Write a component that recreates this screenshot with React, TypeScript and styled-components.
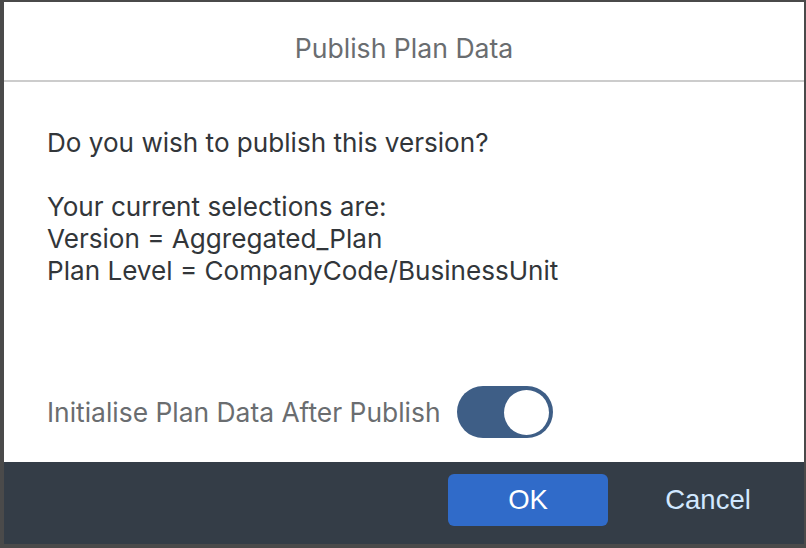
import * as React from "react";
import styled, { createGlobalStyle } from "styled-components";

const GlobalStyle = createGlobalStyle`
  html, body {
    margin: 0;
    padding: 0;
    background: #4a4a4a;
  }
  body {
    font-family: Inter, "Noto Sans", "Liberation Sans", Arial, sans-serif;
  }
`;

const Backdrop = styled.div`
  width: 806px;
  height: 548px;
  padding: 2px 2px 4px 4px;
  box-sizing: border-box;
  background: #4a4a4a;
`;

const Dialog = styled.div`
  width: 800px;
  height: 542px;
  display: flex;
  flex-direction: column;
  background: #ffffff;
`;

const Header = styled.div`
  height: 80px;
  box-sizing: border-box;
  padding-top: 13px;
  display: flex;
  align-items: center;
  justify-content: center;
  border-bottom: 2px solid #cccccc;
  font-size: 26.6px;
  color: #6a6d70;
`;

const Body = styled.div`
  flex: 1;
  display: flex;
  flex-direction: column;
  justify-content: space-between;
  padding: 45px 43px 24px;
`;

const Message = styled.div`
  font-size: 26.1px;
  line-height: 32px;
  color: #32363a;
`;

const Line = styled.div<{ $gapBefore?: boolean }>`
  margin-top: ${(p) => (p.$gapBefore ? "32px" : "0")};
`;

const OptionRow = styled.div`
  display: flex;
  align-items: center;
  gap: 16px;
`;

const OptionLabel = styled.span`
  font-size: 26.4px;
  color: #6a6d70;
`;

const Track = styled.button<{ $on: boolean }>`
  width: 96px;
  height: 52px;
  border: none;
  border-radius: 26px;
  padding: 0 4px;
  display: flex;
  align-items: center;
  justify-content: ${(p) => (p.$on ? "flex-end" : "flex-start")};
  background: ${(p) => (p.$on ? "#3e5e86" : "#8396a8")};
  cursor: pointer;
`;

const Knob = styled.span`
  width: 45px;
  height: 45px;
  border-radius: 50%;
  background: #ffffff;
`;

const Footer = styled.div`
  height: 82px;
  box-sizing: border-box;
  display: flex;
  justify-content: flex-end;
  align-items: flex-start;
  gap: 20px;
  padding: 12px 16px 0 0;
  background: #343d47;
`;

const ActionButton = styled.button<{ $primary?: boolean }>`
  width: 160px;
  height: 52px;
  border: none;
  border-radius: 6px;
  font-family: "Liberation Sans", Arial, sans-serif;
  font-size: 27.5px;
  background: ${(p) => (p.$primary ? "#306bc9" : "transparent")};
  color: ${(p) => (p.$primary ? "#ffffff" : "#d1e8ff")};
  cursor: pointer;
`;

export default function App() {
  const [initialise, setInitialise] = React.useState(true);

  return (
    <>
      <GlobalStyle />
      <Backdrop>
        <Dialog>
          <Header>Publish Plan Data</Header>
          <Body>
            <Message>
              <Line>Do you wish to publish this version?</Line>
              <Line $gapBefore>Your current selections are:</Line>
              <Line>Version = Aggregated_Plan</Line>
              <Line>Plan Level = CompanyCode/BusinessUnit</Line>
            </Message>
            <OptionRow>
              <OptionLabel>Initialise Plan Data After Publish</OptionLabel>
              <Track $on={initialise} onClick={() => setInitialise(!initialise)}>
                <Knob />
              </Track>
            </OptionRow>
          </Body>
          <Footer>
            <ActionButton $primary>OK</ActionButton>
            <ActionButton>Cancel</ActionButton>
          </Footer>
        </Dialog>
      </Backdrop>
    </>
  );
}
